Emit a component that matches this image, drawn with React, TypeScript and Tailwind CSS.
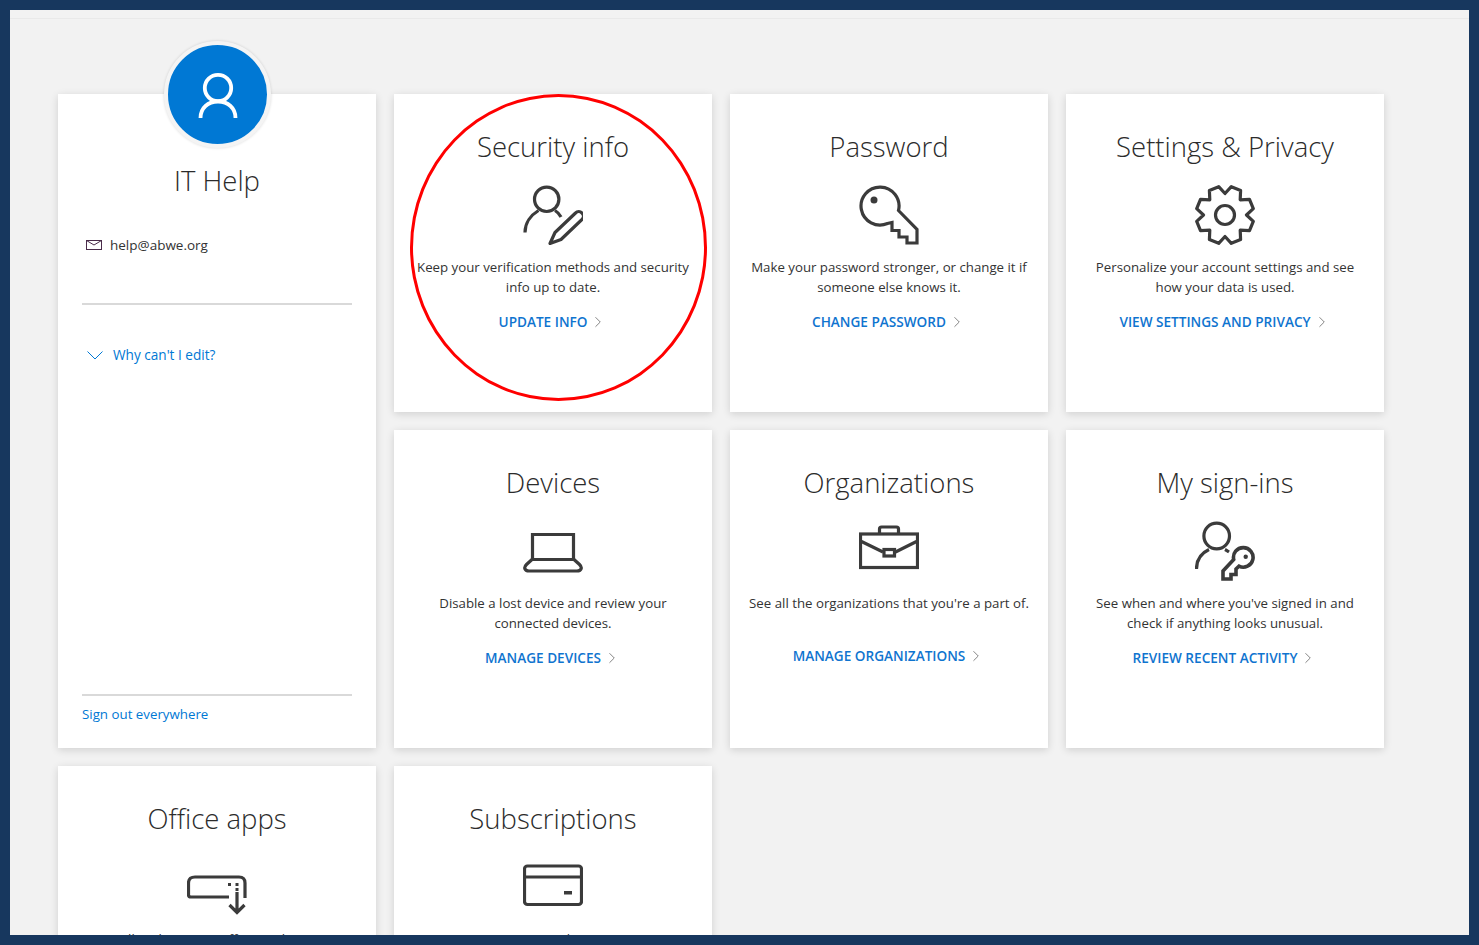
import { ChevronRight } from 'lucide-react';
import type { ReactNode } from 'react';

// 8 tooth gear outline, points worked out from the centre
function gearPath() {
  const pts: string[] = [];
  for (let i = 0; i < 8; i++) {
    const mid = -67.5 + i * 45;
    [[mid - 10, 29], [mid + 10, 29], [mid + 22.5, 21.5]].forEach(([a, r]) => {
      const rad = (a * Math.PI) / 180;
      pts.push(`${(30 + r * Math.cos(rad)).toFixed(1)} ${(30 + r * Math.sin(rad)).toFixed(1)}`);
    });
  }
  return `M${pts.join(' L')} Z`;
}

function Icon({ children }: { children: ReactNode }) {
  return (
    <svg viewBox="0 0 60 60" className="h-[60px] w-[60px]" fill="none" stroke="#3b3b3b" strokeWidth={3.2}>
      {children}
    </svg>
  );
}

const icons = {
  security: (
    <Icon>
      <circle cx="23.7" cy="14.3" r="12.2" />
      <path d="M2 47.5C2 38 8 30 15.5 25.5M32 25.5C34.5 27 36.5 29 38 32" />
      <path d="M27 58.5L32 47.5L52.5 28A4.5 4.5 0 0 1 59 34.5L38 54.5Z" strokeLinejoin="round" />
    </Icon>
  ),
  password: (
    <Icon>
      <path d="M39.5 25.5L58 44.5V58H48V52H40V45.5H33V37.5L28.5 38.5A19 19 0 1 1 39.5 25.5Z" />
      <circle cx="15" cy="15" r="3.5" fill="#3b3b3b" stroke="none" />
    </Icon>
  ),
  settings: (
    <Icon>
      <path d={gearPath()} strokeLinejoin="round" />
      <circle cx="30" cy="30" r="9.5" />
    </Icon>
  ),
  devices: (
    <Icon>
      <path d="M9.5 39V13.5H50.5V39" />
      <path d="M9 38.5H51L56.5 43.5Q59 46 58 48Q57 50 54 50H6Q3 50 2 48Q1 46 3.5 43.5Z" strokeLinejoin="round" />
    </Icon>
  ),
  organizations: (
    <Icon>
      <rect x="1.5" y="13" width="57" height="33.5" />
      <path d="M20.5 12V8Q20.5 6 22.5 6H37.5Q39.5 6 39.5 8V12" />
      <path d="M2.5 20.5L24 31M36.5 31L57.5 20.5" />
      <rect x="25" y="28.5" width="10.5" height="6.5" />
    </Icon>
  ),
  signins: (
    <Icon>
      <circle cx="21.7" cy="15" r="12.8" />
      <path d="M1.5 48C1.5 39 6.5 32 14 28.5M30 28.5C31 29 32.5 30 34 31" />
      <path d="M38.7 38.5L28 50V58H36V53.5H41V48L44 45.2A9.8 9.8 0 1 0 38.7 38.5Z" strokeWidth={3.6} />
      <circle cx="50.7" cy="35.7" r="2.2" fill="#3b3b3b" stroke="none" />
    </Icon>
  ),
  office: (
    <Icon>
      <path d="M42 40H4Q1.5 40 1.5 38V26Q1.5 20 8 20H52Q58 20 58 26V41" />
      <path d="M50 35V55M42.5 48L50 55.5L57.5 48" />
      <rect x="41" y="26" width="3" height="3" fill="#3b3b3b" stroke="none" />
      <rect x="48.5" y="26" width="3" height="3" fill="#3b3b3b" stroke="none" />
      <rect x="48.5" y="31" width="3" height="3" fill="#3b3b3b" stroke="none" />
    </Icon>
  ),
  subscriptions: (
    <Icon>
      <rect x="1.5" y="9" width="57" height="38.5" rx="3" />
      <path d="M1.5 20H58.5" />
      <rect x="41" y="34" width="8" height="3.5" fill="#3b3b3b" stroke="none" />
    </Icon>
  ),
};

const cards = [
  { title: 'Security info', icon: icons.security, text: 'Keep your verification methods and security info up to date.', link: 'UPDATE INFO', circled: true },
  { title: 'Password', icon: icons.password, text: 'Make your password stronger, or change it if someone else knows it.', link: 'CHANGE PASSWORD' },
  { title: 'Settings & Privacy', icon: icons.settings, text: 'Personalize your account settings and see how your data is used.', link: 'VIEW SETTINGS AND PRIVACY' },
  { title: 'Devices', icon: icons.devices, text: 'Disable a lost device and review your connected devices.', link: 'MANAGE DEVICES' },
  { title: 'Organizations', icon: icons.organizations, text: "See all the organizations that you're a part of.", link: 'MANAGE ORGANIZATIONS', short: true },
  { title: 'My sign-ins', icon: icons.signins, text: "See when and where you've signed in and check if anything looks unusual.", link: 'REVIEW RECENT ACTIVITY' },
  { title: 'Office apps', icon: icons.office, text: 'Install and manage Office applications.', link: 'INSTALL OFFICE' },
  { title: 'Subscriptions', icon: icons.subscriptions, text: 'Manage your subscriptions.', link: 'VIEW SUBSCRIPTIONS' },
];

type CardProps = (typeof cards)[number] & { circled?: boolean; short?: boolean };

function Card({ title, icon, text, link, circled, short }: CardProps) {
  return (
    <div className="relative flex h-[318px] flex-col items-center bg-white px-[16px] pt-[35px] shadow-[0_2px_8px_rgba(0,0,0,0.14)]">
      <h2 className="text-[27.5px] leading-[36px] font-light text-[#2b2b2b]">{title}</h2>
      <div className="mt-[20px]">{icon}</div>
      <p className={`mt-[12px] text-center text-[13.25px] leading-[20px] text-[#333] ${short ? 'h-[38px]' : ''}`}>{text}</p>
      <a className="mt-[15px] flex items-center gap-[2px] text-[13.6px] leading-[20px] font-semibold text-[#0f74cf]">
        {link}
        <ChevronRight size={18} strokeWidth={1.2} className="text-[#777]" />
      </a>
      {circled && (
        <div className="pointer-events-none absolute top-0 left-[16px] h-[307px] w-[297px] rounded-[50%] border-[3px] border-[#f00]" />
      )}
    </div>
  );
}

function ProfileCard() {
  return (
    <div className="relative row-span-2 flex flex-col bg-white px-[24px] pt-[69px] pb-[24px] shadow-[0_2px_8px_rgba(0,0,0,0.14)]">
      <div className="absolute -top-[53px] left-[106px] flex h-[107px] w-[107px] items-center justify-center rounded-full border-4 border-[#f4f4f4] bg-[#0078d4] shadow-[0_0_3px_rgba(0,0,0,0.15)]">
        <svg viewBox="0 0 60 60" className="h-[60px] w-[60px]" fill="none" stroke="#fff" strokeWidth={3.8}>
          <circle cx="30" cy="23" r="13.2" />
          <path d="M12.5 53C12.5 43 20 36.5 30 36.5C40 36.5 47.5 43 47.5 53" />
        </svg>
      </div>
      <h2 className="text-center text-[27.5px] leading-[36px] font-light text-[#2b2b2b]">IT Help</h2>
      <div className="mt-[36px] flex items-center gap-[8px] pl-[4px] text-[13.5px] leading-[20px] text-[#333]">
        <svg viewBox="0 0 16 10" className="h-[10px] w-[16px]" fill="none" stroke="#4a2c4a" strokeWidth={1}>
          <rect x="0.5" y="0.5" width="15" height="9" />
          <path d="M0.5 0.5L8 5L15.5 0.5" />
        </svg>
        help@abwe.org
      </div>
      <div className="mt-[48px] h-[2px] bg-[#d9d9d9]" />
      <a className="mt-[40px] flex items-center gap-[10px] pl-[5px] text-[13.6px] leading-[20px] text-[#0078d4]">
        <svg viewBox="0 0 16 9" className="h-[9px] w-[16px]" fill="none" stroke="#0078d4" strokeWidth={1}>
          <path d="M0.5 0.5L8 8L15.5 0.5" />
        </svg>
        Why can't I edit?
      </a>
      <div className="mt-auto h-[2px] bg-[#d9d9d9]" />
      <a className="mt-[8px] text-[13.3px] leading-[20px] text-[#0078d4]">Sign out everywhere</a>
    </div>
  );
}

export default function App() {
  return (
    <div className="h-screen overflow-hidden border-[10px] border-[#17375e] bg-[#f2f2f2] font-['Open_Sans','Liberation_Sans',sans-serif]">
      <div className="h-[9px] border-b border-[#e9e9e9]" />
      <div className="grid grid-cols-[repeat(4,318px)] gap-[18px] pt-[75px] pl-[48px]">
        <ProfileCard />
        {cards.map((card) => (
          <Card key={card.title} {...card} />
        ))}
      </div>
    </div>
  );
}
